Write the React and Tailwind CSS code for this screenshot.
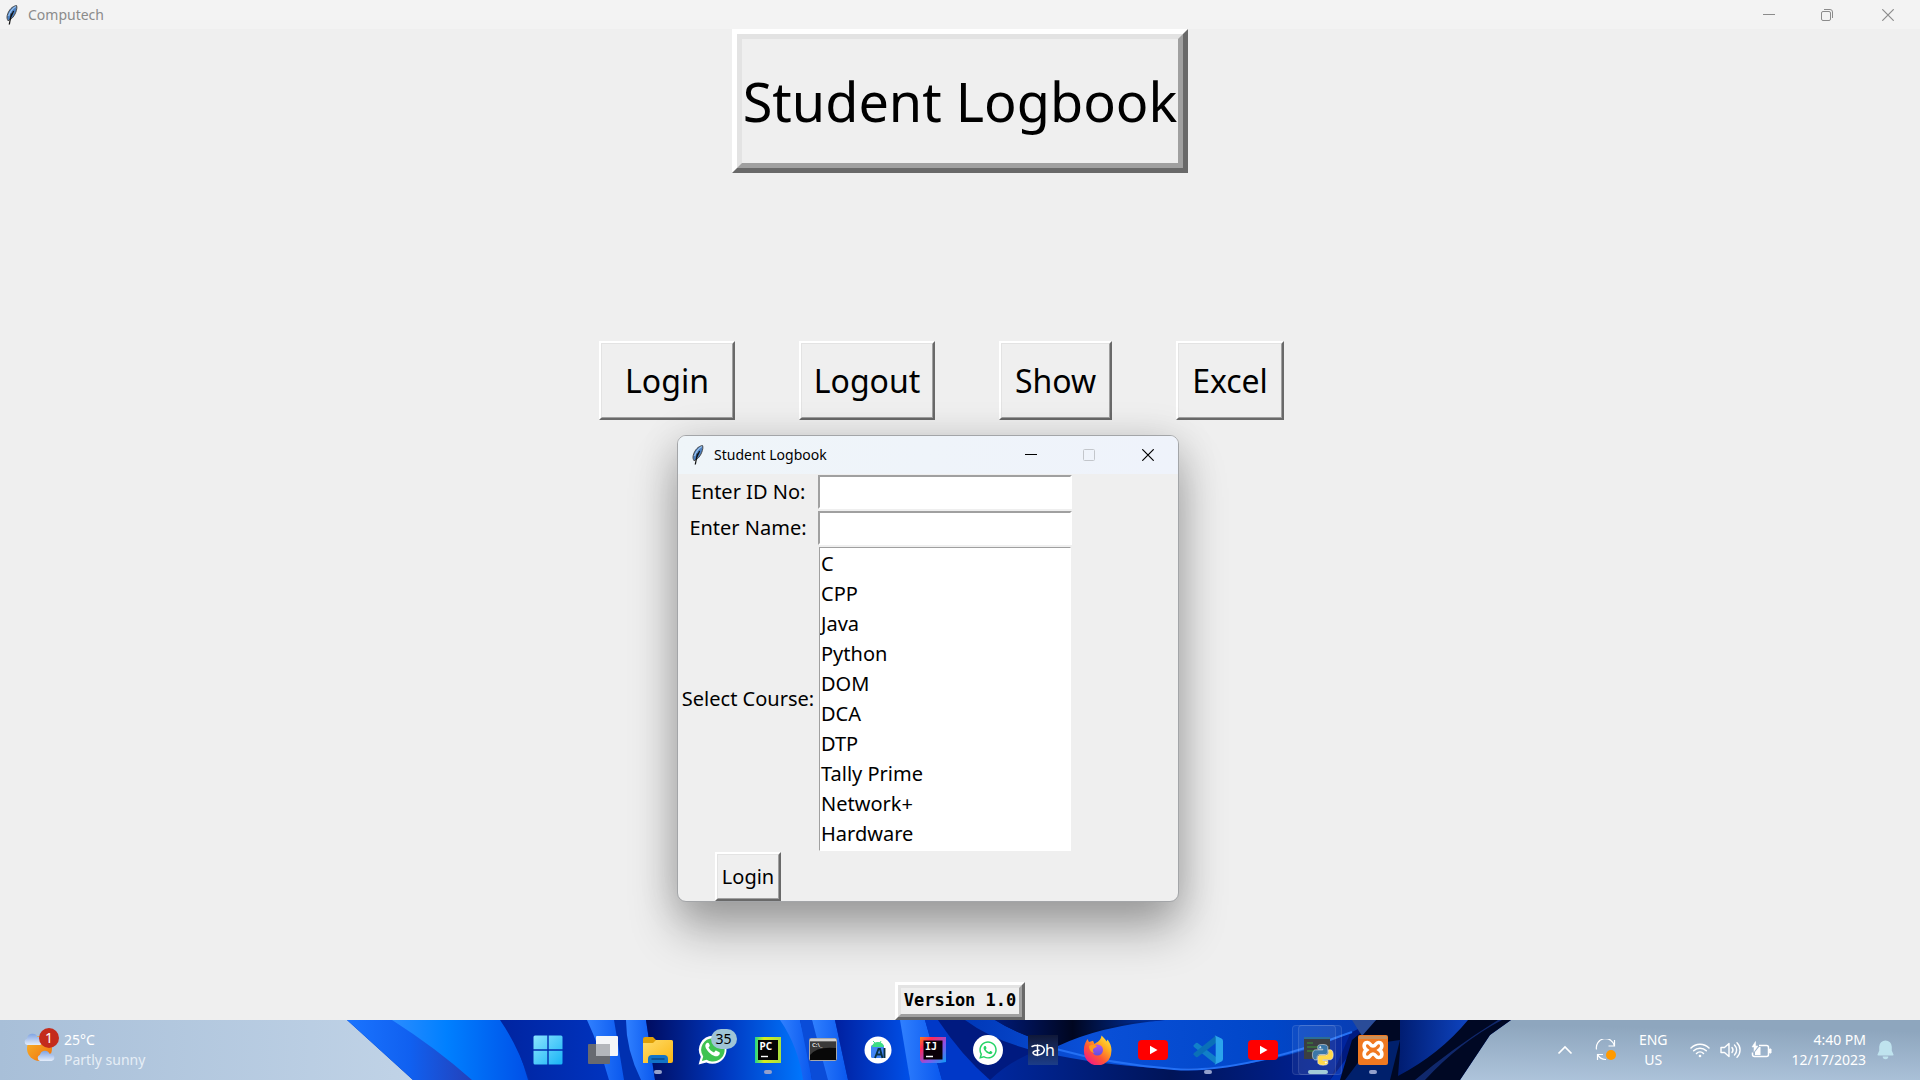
import React from "react";
import { FaWhatsapp } from "react-icons/fa";

const UI = "font-['Segoe_UI','Noto_Sans',sans-serif]";
const COMIC = "font-['Comic_Sans_MS','Noto_Sans',sans-serif]";

const courses = ["C", "CPP", "Java", "Python", "DOM", "DCA", "DTP", "Tally Prime", "Network+", "Hardware"];

function Feather() {
  return (
    <svg width="12" height="20" viewBox="0 0 12 20" aria-hidden="true">
      <path d="M10.600.6C6.500 1 2.500 5 1.200 10.500c-.4 2-.2 3.600.8 5.200l1.200-.6C7 13.500 10 8.500 10.800 3.500c.1-1.200.1-2.100-.2-2.900Z" fill="#4a7fc0" stroke="#4b4b4b" strokeWidth="1" />
      <path d="M9.800 1.400C6.500 3.500 3.800 7 2.600 11" stroke="#9cc4ef" strokeWidth="1.200" fill="none" />
      <path d="M7.600 6C5.500 9.500 3.900 13 3.300 19.500M5.500 8.500 4 15.500" stroke="#111" strokeWidth="1.300" fill="none" />
    </svg>
  );
}

function Minimize() {
  return (
    <svg width="12" height="12" viewBox="0 0 12 12" fill="none" stroke="currentColor" aria-hidden="true">
      <path d="M0 5.500h12" />
    </svg>
  );
}

function Restore() {
  return (
    <svg width="12" height="12" viewBox="0 0 12 12" fill="none" stroke="currentColor" aria-hidden="true">
      <rect x=".5" y="2.500" width="9" height="9" rx="1.500" />
      <path d="M3 .5h6A2.500 2.500 0 0 1 11.500 3v6" />
    </svg>
  );
}

function Maximize() {
  return (
    <svg width="12" height="12" viewBox="0 0 12 12" fill="none" stroke="currentColor" aria-hidden="true">
      <rect x=".5" y=".5" width="11" height="11" rx="1" />
    </svg>
  );
}

function Close() {
  return (
    <svg width="12" height="12" viewBox="0 0 12 12" fill="none" stroke="currentColor" strokeWidth="1.200" aria-hidden="true">
      <path d="m.3.3 11.400 11.400M11.700.3.3 11.700" />
    </svg>
  );
}

function CaptionButton({ label, width = "w-[58px]", color = "", children }) {
  return (
    <button type="button" aria-label={label} className={`flex h-full items-center justify-center ${width} ${color}`}>
      {children}
    </button>
  );
}

function RaisedButton({ className, children }) {
  return (
    <button
      type="button"
      className={`border-2 border-t-white border-l-white border-r-[#696969] border-b-[#696969] bg-[#efefef] text-black ${className}`}
    >
      <span className="flex h-full w-full items-center justify-center border border-t-[#e3e3e3] border-l-[#e3e3e3] border-r-[#a0a0a0] border-b-[#a0a0a0]">
        {children}
      </span>
    </button>
  );
}

function LogbookWindow() {
  return (
    <section
      className="absolute top-[406px] left-[677px] w-[502px] overflow-hidden rounded-[9px] border border-[#a3a5a8] bg-[#efefef] text-black shadow-[0_28px_48px_rgba(0,0,0,0.30),0_4px_40px_rgba(0,0,0,0.14)]"
    >
      <header className={`flex h-[38px] items-center bg-linear-to-r from-[#eff5f9] to-[#eff3fb] ${UI}`}>
        <div className="flex flex-1 items-center gap-[10px] pl-[14px]">
          <Feather />
          <h2 className="text-[14px] leading-5">Student Logbook</h2>
        </div>
        <CaptionButton label="Minimize"><Minimize /></CaptionButton>
        <CaptionButton label="Maximize" color="text-[#c3c6cb]"><Maximize /></CaptionButton>
        <CaptionButton label="Close" width="w-[60px]"><Close /></CaptionButton>
      </header>
      <form className={`grid grid-cols-[140px_254px] justify-start text-[20px] ${COMIC}`}>
        <label htmlFor="idno" className="flex h-9 items-center justify-center">Enter ID No:</label>
        <input id="idno" type="text" className="mt-px h-[34px] border-2 border-t-[#a0a0a0] border-l-[#a0a0a0] border-r-white border-b-white bg-white px-1 outline-none" />
        <label htmlFor="name" className="flex h-9 items-center justify-center">Enter Name:</label>
        <input id="name" type="text" className="mt-px h-[34px] border-2 border-t-[#a0a0a0] border-l-[#a0a0a0] border-r-white border-b-white bg-white px-1 outline-none" />
        <label htmlFor="course" className="flex items-center justify-center whitespace-nowrap">Select Course:</label>
        <select
          id="course"
          size={10}
          className="mx-px mt-px mb-px h-[304px] overflow-hidden border border-t-[#a0a0a0] border-l-[#a0a0a0] border-r-white border-b-white bg-white pt-[2px] pb-0 outline-none"
        >
          {courses.map((c) => (
            <option key={c} className="h-[30px] p-0 px-px leading-[30px]">{c}</option>
          ))}
        </select>
        <div className="flex justify-center">
          <RaisedButton className="h-[49px] w-[66px]">Login</RaisedButton>
        </div>
      </form>
    </section>
  );
}

function Wallpaper() {
  return (
    <svg className="absolute inset-0 h-full w-full" viewBox="0 0 1920 60" preserveAspectRatio="none" aria-hidden="true">
      <defs>
        <linearGradient id="skyL"><stop offset="0" stopColor="#a8bfd8" /><stop offset=".5" stopColor="#c4d6e9" /><stop offset="1" stopColor="#c4d6e9" /></linearGradient>
        <linearGradient id="skyR" x1="0" y1="1" x2=".25" y2="0"><stop offset="0" stopColor="#b2c8df" /><stop offset="1" stopColor="#8ea6be" /></linearGradient>
        <linearGradient id="b1"><stop offset="0" stopColor="#1a74ff" /><stop offset=".5" stopColor="#1060f0" /><stop offset="1" stopColor="#2440b8" /></linearGradient>
        <linearGradient id="b2"><stop offset="0" stopColor="#2a8cff" /><stop offset=".4" stopColor="#0080ff" /><stop offset="1" stopColor="#0050e8" /></linearGradient>
        <linearGradient id="b3"><stop offset="0" stopColor="#0024a0" /><stop offset="1" stopColor="#0034c0" /></linearGradient>
        <linearGradient id="st"><stop offset="0" stopColor="#3080ff" /><stop offset="1" stopColor="#0a58ee" /></linearGradient>
        <linearGradient id="b4"><stop offset="0" stopColor="#000c60" /><stop offset=".5" stopColor="#0038c0" /><stop offset="1" stopColor="#0078ff" /></linearGradient>
        <linearGradient id="b5"><stop offset="0" stopColor="#0020a0" /><stop offset="1" stopColor="#0050e8" /></linearGradient>
        <linearGradient id="sw"><stop offset="0" stopColor="#0038b8" /><stop offset=".3" stopColor="#0a50d8" /><stop offset=".75" stopColor="#0046c8" /><stop offset="1" stopColor="#0a3cb0" /></linearGradient>
        <linearGradient id="bk"><stop offset="0" stopColor="#001a78" /><stop offset=".5" stopColor="#000620" /><stop offset="1" stopColor="#0030a0" /></linearGradient>
        <linearGradient id="lo"><stop offset="0" stopColor="#0028a0" /><stop offset=".5" stopColor="#001458" /><stop offset="1" stopColor="#0024a0" /></linearGradient>
        <linearGradient id="e1"><stop offset="0" stopColor="#001c70" /><stop offset="1" stopColor="#0e44c0" /></linearGradient>
      </defs>
      <rect width="960" height="60" fill="url(#skyL)" />
      <rect x="960" width="960" height="60" fill="url(#skyR)" />
      <path d="M347 0H1511L1490 15 1460 60H413Z" fill="#0030b0" />
      <path d="M347 0H395Q440 30 474 60H413Z" fill="url(#b1)" />
      <path d="M392 0H505Q518 25 528 60H472Q436 28 392 0Z" fill="url(#b2)" />
      <path d="M500 0H590L612 60H529Q518 26 500 0Z" fill="url(#b3)" />
      <path d="M587 0H614L624 60H609Q600 28 587 0Z" fill="url(#st)" />
      <path d="M626 0H646L655 60H641Q626 30 626 0Z" fill="url(#st)" />
      <path d="M646 0H782Q800 28 805 60H655Z" fill="url(#b4)" />
      <path d="M780 0H800Q808 30 812 60H803Q798 26 780 0Z" fill="url(#st)" />
      <path d="M800 0H812L830 60H812Z" fill="#0a4cd8" />
      <path d="M812 0H835L848 60H828Z" fill="url(#st)" />
      <path d="M835 0H902L910 60H848Z" fill="url(#b5)" />
      <path d="M900 0H925L942 60H910Z" fill="url(#st)" />
      <path d="M925 0H938Q962 36 990 60H942Z" fill="#0038c8" />
      <path d="M938 0H1376L1330 60H990Q962 36 938 0Z" fill="#001a80" />
      <path d="M1040 30Q1110 46 1174 50T1350 14L1330 60H990Q1010 40 1040 30Z" fill="url(#lo)" />
      <path d="M985 0H1160Q1100 12 1058 28Q1020 18 985 0Z" fill="url(#bk)" />
      <path d="M965 0H995Q1020 16 1058 26Q1100 6 1165 0H1376L1352 12Q1270 50 1174 49Q1110 46 1060 36Q1000 26 965 0Z" fill="url(#sw)" />
      <path d="M995 0H1150Q1095 6 1058 25Q1020 16 995 0Z" fill="url(#bk)" />
      <path d="M1056 29Q1110 44 1174 49T1352 12" fill="none" stroke="#2470f4" strokeWidth="2" />
      <path d="M1352 20 1376 0H1511L1490 15 1460 60H1340Z" fill="#000824" />
      <path d="M1352 0H1376L1362 16Z" fill="#2a4c98" />
      <path d="M1345 60 1372 24 1400 20 1390 60Z" fill="#00206c" />
      <path d="M1400 30V0H1468Q1440 34 1398 56Z" fill="url(#e1)" />
      <path d="M1425 60Q1460 22 1502 0H1498Q1450 30 1415 60Z" fill="#10286c" />
    </svg>
  );
}

function StartIcon() {
  return (
    <svg width="30" height="30" viewBox="0 0 30 30">
      <defs><linearGradient id="win" x1="0" y1="0" x2="1" y2="1"><stop stopColor="#8be4ff" /><stop offset="1" stopColor="#18b4f6" /></linearGradient></defs>
      <path d="M2 .5h12.300v13.800H.5V2A1.500 1.500 0 0 1 2 .5ZM15.700.5H28A1.500 1.500 0 0 1 29.500 2v12.300H15.700ZM.5 15.700h13.800v13.800H2A1.500 1.500 0 0 1 .5 28ZM15.700 15.700h13.800V28a1.500 1.500 0 0 1-1.500 1.500H15.700Z" fill="url(#win)" />
    </svg>
  );
}
function TaskViewIcon() {
  return (
    <svg width="30" height="30" viewBox="0 0 30 30">
      <rect x="0" y="9" width="22" height="20" rx="1" fill="#686a70" />
      <rect x="8" y="1" width="22" height="20" rx="1" fill="#f4f5f8" />
      <path d="M8 9h14v12H8Z" fill="#b4b6bb" />
    </svg>
  );
}
function FolderIcon() {
  return (
    <svg width="30" height="30" viewBox="0 0 30 30">
      <defs><linearGradient id="fold" x1="0" y1="0" x2="1" y2="1"><stop stopColor="#ffdc6a" /><stop offset="1" stopColor="#fbb612" /></linearGradient></defs>
      <path d="M0 4a2 2 0 0 1 2-2h8l3 3h15a2 2 0 0 1 2 2v5H0Z" fill="#e0a008" />
      <path d="M0 8h10l3-3h15a2 2 0 0 1 2 2v19a2 2 0 0 1-2 2H0Z" fill="url(#fold)" />
      <path d="M5 28v-4a4 4 0 0 1 4-4h12a4 4 0 0 1 4 4v4Z" fill="#1173c8" />
      <path d="M9 24h12" stroke="#0a4a88" strokeWidth="1.500" strokeLinecap="round" />
    </svg>
  );
}
function WhatsAppBadged() {
  return (
    <span className="relative flex h-[30px] w-[30px]">
      <svg width="30" height="30" viewBox="0 0 30 30">
        <path d="M15 .8a14 14 0 0 0-12.200 21L.6 29.400l7.800-2A14 14 0 1 0 15 .8Z" fill="#fff" />
        <path d="M15 3.200A11.700 11.700 0 0 0 5.200 21.400L3.900 26l4.800-1.200A11.700 11.700 0 1 0 15 3.200Z" fill="#3fc351" />
        <path d="M11 8.500c-.5-.9-1-.9-1.600-.8-1.500.5-2.300 2-2 3.800.6 3.500 5.400 8.600 9.600 9.700 2.300.5 4.500-.8 4.800-2.800.1-.6 0-.9-.4-1.200l-3-1.500c-.5-.2-.8-.1-1.200.4l-1.200 1.400c-2.600-1-4.300-2.600-5.500-4.900l1-1.300c.3-.4.3-.7.200-1.100Z" fill="#fff" />
      </svg>
      <span className="absolute -top-[6px] left-[13px] flex h-[20px] w-[26px] items-center justify-center rounded-full bg-[#9fc5d6] text-[14px] leading-none text-black">35</span>
    </span>
  );
}
function PyCharmIcon() {
  return (
    <svg width="28" height="28" viewBox="0 0 28 28">
      <defs><linearGradient id="pc"><stop stopColor="#21d789" /><stop offset=".35" stopColor="#d8ee1c" /><stop offset="1" stopColor="#a8e040" /></linearGradient></defs>
      <path d="M1 1h26v26H1Z" fill="url(#pc)" />
      <path d="M4 4h20v20H4Z" fill="#050505" />
      <path d="M7 20.500h7" stroke="#fff" strokeWidth="1.400" />
      <text x="5.500" y="13.500" fontSize="10" fontWeight="700" fill="#fff">PC</text>
    </svg>
  );
}
function ConsoleIcon() {
  return (
    <svg width="28" height="24" viewBox="0 0 28 24">
      <rect x=".5" y=".5" width="27" height="22" rx="1" fill="#080808" stroke="#a8a8a8" />
      <path d="M1 1h26v2.500H1Z" fill="#d0d0d0" />
      <path d="M1 4h26v6Q8 8 1 17Z" fill="#3a3a3a" />
      <text x="3" y="9" fontSize="6" fontWeight="700" fill="#ddd">C:\_</text>
    </svg>
  );
}
function AndroidStudioIcon() {
  return (
    <svg width="28" height="28" viewBox="0 0 28 28">
      <circle cx="14" cy="14" r="13.500" fill="#fff" />
      <rect x="7" y="9" width="13" height="13" rx="1.500" fill="#4285f4" />
      <path d="M8 11a6 5 0 0 1 12 0Z" fill="#3ddc84" />
      <path d="m9 5 2 2M17 5l-1 2" stroke="#3ddc84" />
      <path d="m11 22 3.500-9h1.500l2.500 9M12.500 18.500h5M20.500 12v10" stroke="#073042" strokeWidth="1.900" fill="none" />
    </svg>
  );
}
function IntelliJIcon() {
  return (
    <svg width="28" height="28" viewBox="0 0 28 28">
      <defs><linearGradient id="ij" x1="0" y1="0" x2="1" y2="1"><stop stopColor="#fc801d" /><stop offset=".25" stopColor="#fe2857" /><stop offset=".6" stopColor="#8a52e8" /><stop offset="1" stopColor="#07a0f8" /></linearGradient></defs>
      <path d="M1 1h26v25l-6 1H3l-2-3Z" fill="url(#ij)" />
      <path d="M4.500 4.500h19v19h-19Z" fill="#0a0008" />
      <text x="6" y="13.500" fontSize="10" fontWeight="700" fill="#fff" fontFamily="DejaVu Sans Mono, monospace">IJ</text>
      <path d="M7 20.500h7" stroke="#fff" strokeWidth="1.500" />
    </svg>
  );
}
function WhatsAppRound() {
  return (
    <span className="flex h-[30px] w-[30px] items-center justify-center rounded-full bg-white text-[#25d366]">
      <FaWhatsapp size={20} />
    </span>
  );
}
function HotstarIcon() {
  return (
    <svg width="30" height="30" viewBox="0 0 30 30">
      <defs><linearGradient id="hs" x1="0" y1="0" x2="0" y2="1"><stop stopColor="#101838" /><stop offset="1" stopColor="#1c3d88" /></linearGradient></defs>
      <path d="M0 0h30v30H0Z" fill="url(#hs)" />
      <path d="M4 11.500c6-3 12.500-.5 12.300 3.500-.2 4-6 6.300-9.800 4.500-3-1.500-1.600-3.800 4.500-4.300M9.500 10v10.500" stroke="#fff" strokeWidth="1.500" fill="none" strokeLinecap="round" />
      <text x="17" y="21" fontSize="16" fill="#fff">h</text>
    </svg>
  );
}
function FirefoxIcon() {
  return (
    <svg width="30" height="30" viewBox="0 0 30 30">
      <defs>
        <linearGradient id="ff" x1="1" y1="0" x2=".2" y2="1"><stop stopColor="#fff44f" /><stop offset=".35" stopColor="#ffb020" /><stop offset=".65" stopColor="#ff5634" /><stop offset="1" stopColor="#f0148c" /></linearGradient>
        <linearGradient id="fg" x1="0" y1="0" x2="0" y2="1"><stop stopColor="#b055f0" /><stop offset="1" stopColor="#5b50e0" /></linearGradient>
      </defs>
      <path d="M18.500.5c1.500 1.500 4 3.500 5 6l1-2c3 4 4.500 8 3.800 12.500A13.500 13.500 0 0 1 1 16.500C.5 12 2 7.500 4.500 4l1.500 3 4-1.300 1.500 3.300C14 7 18 6 18.500.5Z" fill="url(#ff)" />
      <circle cx="14.500" cy="15" r="5.500" fill="url(#fg)" />
      <path d="M6 11c3-2 6-1.500 8 .5l-3 1.700c-1.800 1.300-1.300 3.500.5 4.800-3-.3-5.500-3-5.500-7Z" fill="#ff9a1c" />
    </svg>
  );
}
function YouTubeIcon() {
  return (
    <svg width="30" height="20" viewBox="0 0 30 20">
      <rect width="30" height="20" rx="4" fill="#f00" />
      <path d="m12 5.800 7.500 4.200-7.500 4.200Z" fill="#fff" />
    </svg>
  );
}
function VSCodeIcon() {
  return (
    <svg width="30" height="30" viewBox="0 0 30 30">
      <path d="M.6 10.200 3 8q.8-.6 1.600 0L23 22v7.500L1 12Q0 11 .6 10.200Z" fill="#1180c8" />
      <path d="M.6 19.800 3 22q.8.6 1.600 0L23 8V.5L1 18q-1 .9-.4 1.800Z" fill="#0a70b8" />
      <path d="M21.500.3 28.500 3.500Q30 4.300 30 6v18q0 1.700-1.500 2.500l-7 3.200q1.200-.8 1.200-2.200V2.500Q22.700 1 21.500.3Z" fill="#2ba4ec" />
    </svg>
  );
}
function PythonConsoleIcon() {
  return (
    <svg width="32" height="32" viewBox="0 0 32 32">
      <path d="M2 3h26v22H2Z" fill="#3c3f42" />
      <path d="M2 3h26v2H2Z" fill="#2c6e94" />
      <path d="M5 9h6M5 13h12M5 17h7" stroke="#3b7a3b" strokeWidth="1.300" />
      <g transform="translate(10.500 10.500) scale(.86)" stroke="#fff" strokeWidth=".6">
        <path fill="#3b77a8" d="M14.250.18l.9.2.73.26.59.3.45.32.34.34.25.34.16.33.1.3.04.26.02.2-.01.13V8.5l-.05.63-.13.55-.21.46-.26.38-.3.31-.33.25-.35.19-.35.14-.33.1-.3.07-.26.04-.21.02H8.770l-.69.05-.59.14-.5.22-.41.27-.33.32-.27.35-.2.36-.15.37-.1.35-.07.32-.04.27-.02.21v3.060H3.170l-.21-.03-.28-.07-.32-.12-.35-.18-.36-.26-.36-.36-.35-.46-.32-.59-.28-.73-.21-.88-.14-1.050-.05-1.230.06-1.220.16-1.040.24-.87.32-.71.36-.57.4-.44.42-.33.42-.24.4-.16.36-.1.32-.05.24-.01h.16l.06.01h8.160v-.83H6.180l-.01-2.750-.02-.37.05-.34.11-.31.17-.28.25-.26.31-.23.38-.2.44-.18.51-.15.58-.12.64-.1.71-.06.77-.04.84-.02 1.270.05z" />
        <path fill="#ffd94a" d="M21.040 6.110l.28.06.32.12.35.18.36.27.36.35.35.47.32.59.28.73.21.88.14 1.040.05 1.230-.06 1.230-.16 1.040-.24.86-.32.71-.36.57-.4.45-.42.33-.42.24-.4.16-.36.09-.32.05-.24.02-.16-.01h-8.220v.82h5.840l.01 2.760.02.36-.05.34-.11.31-.17.29-.25.25-.31.24-.38.2-.44.17-.51.15-.58.13-.64.09-.71.07-.77.04-.84.01-1.270-.04-1.070-.14-.9-.2-.73-.25-.59-.3-.45-.33-.34-.34-.25-.34-.16-.33-.1-.3-.04-.25-.02-.2.01-.13v-5.340l.05-.64.13-.54.21-.46.26-.38.3-.32.33-.24.35-.2.35-.14.33-.1.3-.06.26-.04.21-.02.13-.01h5.840l.69-.05.59-.14.5-.21.41-.28.33-.32.27-.35.2-.36.15-.36.1-.35.07-.32.04-.28.02-.21V6.070h2.090l.14.01z" />
        <circle cx="9" cy="3.200" r=".8" fill="#fff" />
        <circle cx="15.500" cy="21" r=".8" fill="#fff" />
      </g>
    </svg>
  );
}
function XamppIcon() {
  return (
    <svg width="30" height="30" viewBox="0 0 30 30">
      <rect width="30" height="30" rx="2" fill="#f07820" />
      <path d="M1 1h28v3H1Z" fill="#c8905c" />
      <path d="M9.500 7.500c-4 0-4.500 5-1 7.500-3.500 2.500-3 7.500 1 7.500 3 0 2.500-3.500 5.500-3.500s2.500 3.500 5.500 3.500c4 0 4.500-5 1-7.500 3.500-2.500 3-7.500-1-7.500-3 0-2.500 3.500-5.500 3.500s-2.500-3.500-5.500-3.500Z" fill="none" stroke="#fff" strokeWidth="3.600" />
    </svg>
  );
}

const apps = [
  { name: "Start", Icon: StartIcon },
  { name: "Task view", Icon: TaskViewIcon },
  { name: "File Explorer", Icon: FolderIcon, open: true },
  { name: "WhatsApp", Icon: WhatsAppBadged },
  { name: "PyCharm", Icon: PyCharmIcon, open: true },
  { name: "Command Prompt", Icon: ConsoleIcon },
  { name: "Android Studio", Icon: AndroidStudioIcon },
  { name: "IntelliJ IDEA", Icon: IntelliJIcon },
  { name: "WhatsApp Web", Icon: WhatsAppRound },
  { name: "Disney+ Hotstar", Icon: HotstarIcon },
  { name: "Firefox", Icon: FirefoxIcon },
  { name: "YouTube", Icon: YouTubeIcon },
  { name: "Visual Studio Code", Icon: VSCodeIcon, open: true },
  { name: "YouTube Music", Icon: YouTubeIcon },
  { name: "Python", Icon: PythonConsoleIcon, active: true },
  { name: "XAMPP", Icon: XamppIcon, open: true },
];

function TaskButton({ name, Icon, open, active }) {
  return (
    <button type="button" aria-label={name} className="relative flex h-[60px] w-[55px] items-center justify-center">
      {active && <span className="absolute top-[5px] left-[8px] h-[50px] w-[44px] rounded-[4px] border border-white/10 bg-white/5" />}
      {active && <span className="absolute top-[5px] left-[2px] h-[50px] w-[44px] rounded-[4px] border border-white/10 bg-white/5" />}
      <span className="relative flex"><Icon /></span>
      {open && <span className="absolute bottom-[6px] h-1 w-2 rounded-full bg-[#93a0cc]" />}
      {active && <span className="absolute bottom-[6px] h-1 w-5 rounded-full bg-[#a3cbd8]" />}
    </button>
  );
}

function Weather() {
  return (
    <button type="button" className="flex items-center gap-[6px] text-left">
      <span className="relative flex h-[40px] w-[34px]">
        <svg width="34" height="36" viewBox="0 0 34 36" aria-hidden="true">
          <defs>
            <linearGradient id="sun" x1="0" y1="0" x2="1" y2="1"><stop stopColor="#f7b52c" /><stop offset="1" stopColor="#f0700c" /></linearGradient>
            <linearGradient id="cl" x1="0" y1="0" x2="0" y2="1"><stop stopColor="#7fa3e2" /><stop offset="1" stopColor="#e4edfb" /></linearGradient>
          </defs>
          <circle cx="15.500" cy="18.500" r="12.500" fill="url(#sun)" />
          <path d="M3 15a3.400 3.400 0 0 1 0-6.500 5.500 5.500 0 0 1 10.500-1.500A4 4 0 0 1 16 15Z" fill="url(#cl)" />
          <path d="M16 31a3.300 3.300 0 0 1 0-6.300 5 5 0 0 1 9.500-1A3.700 3.700 0 0 1 27.500 31Z" fill="url(#cl)" />
        </svg>
        <span className="absolute -top-[2px] left-[15px] flex h-5 w-5 items-center justify-center rounded-full bg-[#c42b1c] text-[14px] leading-none text-white">1</span>
      </span>
      <span className="flex flex-col text-[14px] leading-5">
        <span className="text-white">25°C</span>
        <span className="text-[#e6eef6]">Partly sunny</span>
      </span>
    </button>
  );
}

function Tray() {
  return (
    <div className="flex items-center justify-end pr-[26px] text-white">
      <button type="button" aria-label="Show hidden icons" className="mr-[22px] flex">
        <svg width="16" height="10" viewBox="0 0 16 10"><path d="m1.500 8.500 6.500-6.500 6.500 6.500" fill="none" stroke="#fff" strokeWidth="1.700" /></svg>
      </button>
      <button type="button" aria-label="Updates available" className="mr-[22px] flex">
        <svg width="22" height="22" viewBox="0 0 22 22">
          <path d="M1.500 10.500A9 9 0 0 1 19.500 7M19.500 1v6h-6M11 20.500a9 9 0 0 1-8.500-5.500M2.500 21v-5.500H8" fill="none" stroke="#fff" strokeWidth="1.200" />
          <circle cx="16" cy="16" r="5" fill="#ff9a00" />
        </svg>
      </button>
      <button type="button" className="mr-[22px] flex flex-col items-center text-[14px] leading-5">
        <span>ENG</span>
        <span>US</span>
      </button>
      <button type="button" aria-label="Network, volume and battery" className="mr-[20px] flex items-center gap-[10px]">
        <svg width="20" height="16" viewBox="0 0 20 16" fill="none" stroke="#fff" strokeWidth="1.500" strokeLinecap="round">
          <path d="M1 6a12.500 12.500 0 0 1 18 0M3.700 8.800a8.800 8.800 0 0 1 12.600 0M6.500 11.500a5 5 0 0 1 7 0" />
          <circle cx="10" cy="14" r="1.300" fill="#fff" stroke="none" />
        </svg>
        <svg width="21" height="18" viewBox="0 0 21 18" fill="none" stroke="#fff" strokeWidth="1.400" strokeLinecap="round" strokeLinejoin="round">
          <path d="M1 6.500v5h3.500l4.500 4v-13l-4.500 4ZM12 6.500a4 4 0 0 1 0 5M14.500 4a7 7 0 0 1 0 10M17 1.800a10 10 0 0 1 0 14.400" />
        </svg>
        <svg width="21" height="18" viewBox="0 0 21 18" fill="none" stroke="#fff" strokeWidth="1.500" strokeLinejoin="round">
          <path d="M8 4.500h7.500a2 2 0 0 1 2 2v7a2 2 0 0 1-2 2H3.500a2 2 0 0 1-2-2v-2" />
          <path d="M18.500 8v4h1.500V8Z" fill="#fff" strokeWidth="1" />
          <path d="M4 14v-3l4-5h1.500v8Z" fill="#fff" stroke="none" />
          <path d="M4.500.5 1 6h2v4.500L7 5H4.700Z" fill="#fff" strokeWidth=".5" />
        </svg>
      </button>
      <button type="button" className="mr-[11px] flex flex-col items-end text-[14px] leading-5">
        <span>4:40 PM</span>
        <span>12/17/2023</span>
      </button>
      <button type="button" aria-label="Notifications" className="flex">
        <svg width="17" height="20" viewBox="0 0 17 20" fill="#bfe3ee">
          <path d="M8.500.5a6.300 6.300 0 0 0-6.300 6.300v4L.5 14.500q-.3.900.8 1h14.400q1.100-.1.800-1l-1.700-3.700v-4A6.300 6.300 0 0 0 8.500.5ZM5.700 16.500h5.600a2.800 2.800 0 0 1-5.600 0Z" />
        </svg>
      </button>
    </div>
  );
}

export default function App() {
  return (
    <div className={`flex min-h-screen flex-col bg-[#efefef] ${UI}`}>
      <header className="flex h-[29px] items-center bg-[#f3f3f3] text-[#8b8b8b]">
        <div className="flex flex-1 items-center gap-[10px] pl-[6px]">
          <Feather />
          <h1 className="text-[14px] leading-5">Computech</h1>
        </div>
        <CaptionButton label="Minimize"><Minimize /></CaptionButton>
        <CaptionButton label="Restore"><Restore /></CaptionButton>
        <CaptionButton label="Close" width="w-[64px]"><Close /></CaptionButton>
      </header>

      <main className="relative flex flex-1 flex-col items-center text-black">
        <div className="border-[5px] border-t-white border-l-white border-r-[#696969] border-b-[#696969]">
          <div className="flex h-[134px] w-[446px] items-center justify-center border-[5px] border-t-[#e3e3e3] border-l-[#e3e3e3] border-r-[#a0a0a0] border-b-[#a0a0a0] text-[54px] whitespace-nowrap">
            Student Logbook
          </div>
        </div>

        <nav className="mt-[168px] flex gap-16 pr-[37px] text-[32px]">
          <RaisedButton className="h-[79px] w-[136px]">Login</RaisedButton>
          <RaisedButton className="h-[79px] w-[136px]">Logout</RaisedButton>
          <RaisedButton className="h-[79px] w-[113px]">Show</RaisedButton>
          <RaisedButton className="h-[79px] w-[108px]">Excel</RaisedButton>
        </nav>

        <div className="mt-auto border-[3px] border-t-white border-l-white border-r-[#696969] border-b-[#696969]">
          <div className="flex h-[32px] w-[124px] items-center justify-center border-[3px] border-t-[#e3e3e3] border-l-[#e3e3e3] border-r-[#a0a0a0] border-b-[#a0a0a0] font-['DejaVu_Sans_Mono',monospace] text-[17px] font-bold whitespace-nowrap">
            Version 1.0
          </div>
        </div>

        <LogbookWindow />
      </main>

      <footer className="relative h-[60px]">
        <Wallpaper />
        <div className="relative grid h-full grid-cols-[1fr_auto_1fr] items-center">
          <div className="flex pl-[24px]"><Weather /></div>
          <div className="flex">
            {apps.map((a) => <TaskButton key={a.name} {...a} />)}
          </div>
          <Tray />
        </div>
      </footer>
    </div>
  );
}
